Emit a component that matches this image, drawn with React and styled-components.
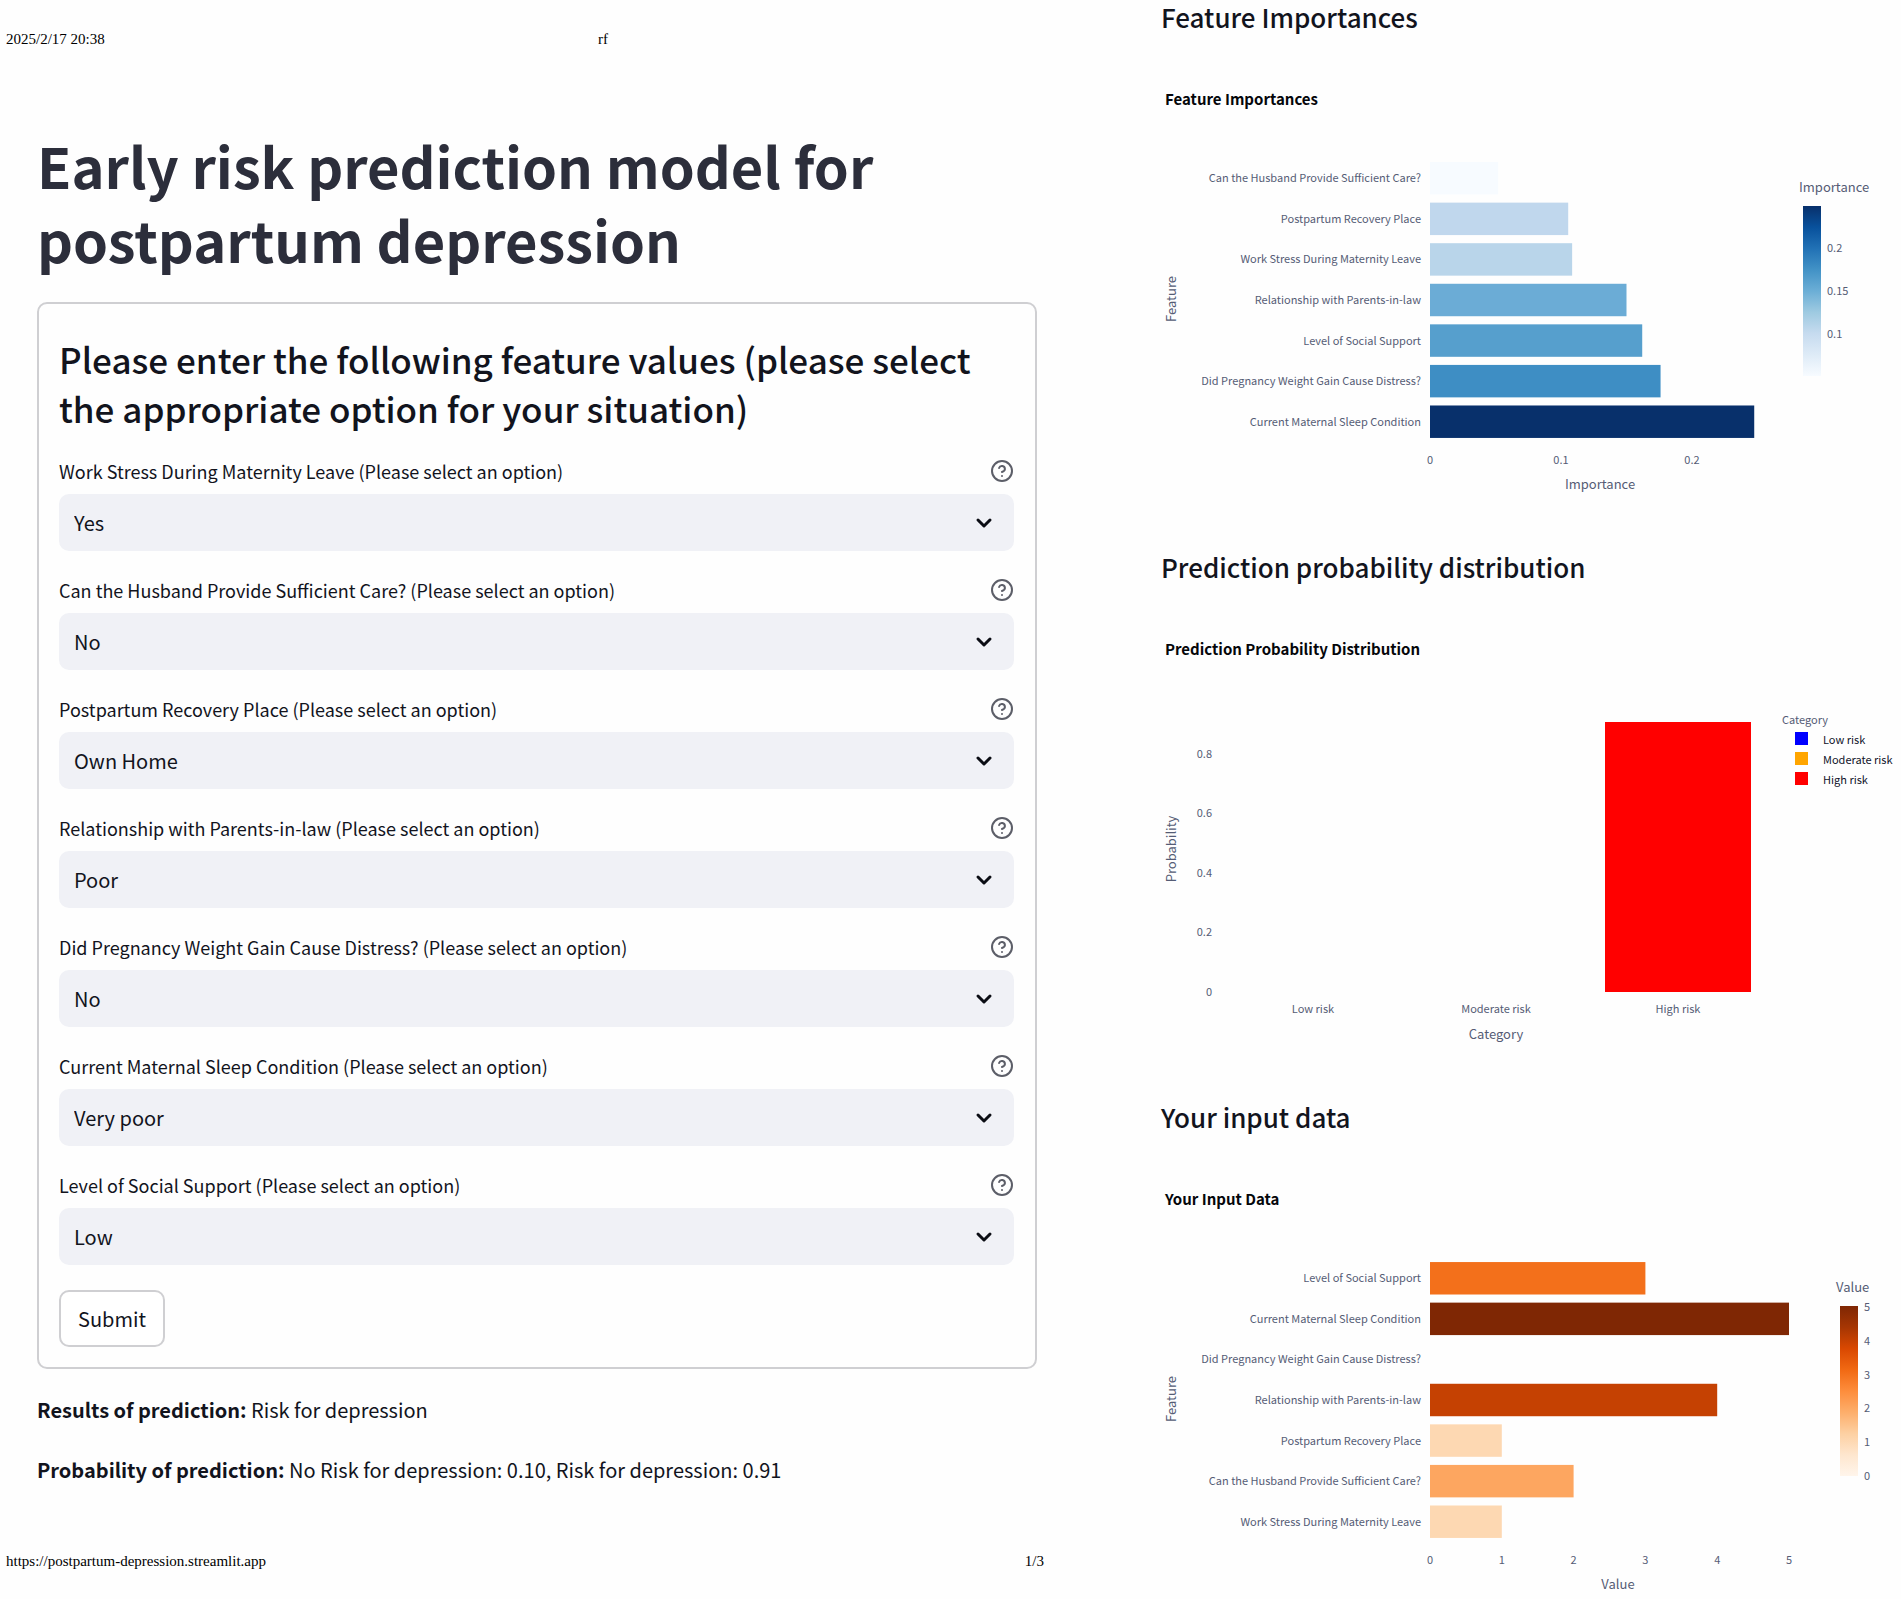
import React, { useState } from 'react';
import styled, { createGlobalStyle } from 'styled-components';
import { ChevronDown, CircleHelp } from 'lucide-react';

const GlobalStyle = createGlobalStyle`
  * {
    box-sizing: border-box;
  }

  body {
    margin: 0;
    background-color: #fefefe;
    color: #12141d;
    font-family: 'Noto Sans CJK SC', 'Noto Sans', sans-serif;
  }
`;

const Page = styled.div`
  display: grid;
  grid-template-columns: minmax(0, 1050fr) minmax(0, 740fr);
  column-gap: 111px;
`;

const Sheet = styled.div`
  display: flex;
  flex-direction: column;
  padding: 0 6px;
`;

const PrintHeader = styled.header`
  display: grid;
  grid-template-columns: 592fr 446fr;
  padding-top: 29px;
  font-family: 'Liberation Serif', serif;
  font-size: 15px;
  line-height: 20px;
  color: #000;
`;

const PrintFooter = styled.footer`
  display: flex;
  justify-content: space-between;
  margin-top: 66px;
  font-family: 'Liberation Serif', serif;
  font-size: 15px;
  line-height: 20px;
  color: #000;
`;

const SiteLink = styled.a`
  color: inherit;
  text-decoration: none;
`;

const Main = styled.main`
  padding: 79px 7px 0 31px;
`;

const Title = styled.h1`
  margin: 0 0 26px;
  font-size: 56px;
  line-height: 74px;
  font-weight: 700;
  color: #2c2e3b;
`;

const Form = styled.form`
  display: flex;
  flex-direction: column;
  gap: 25px;
  padding: 30px 21px 20px 20px;
  border: 2px solid #cfcfd2;
  border-radius: 10px;
`;

const FormTitle = styled.h2`
  margin: 0;
  font-size: 35px;
  line-height: 49px;
  font-weight: 500;
`;

const Field = styled.div`
  display: flex;
  flex-direction: column;
  gap: 9px;
`;

const LabelRow = styled.div`
  display: flex;
  align-items: center;
  justify-content: space-between;
  height: 28px;
`;

const Label = styled.label`
  font-size: 18px;
  line-height: 28px;
`;

const HelpIcon = styled(CircleHelp)`
  width: 24px;
  height: 24px;
  color: #5c5e68;
`;

const SelectBox = styled.div`
  display: grid;
  align-items: center;

  & > * {
    grid-area: 1 / 1;
  }
`;

const Select = styled.select`
  width: 100%;
  height: 57px;
  padding: 0 48px 0 15px;
  border: none;
  border-radius: 10px;
  background-color: #f0f1f6;
  appearance: none;
  font-family: inherit;
  font-size: 20px;
  color: inherit;
`;

const Arrow = styled(ChevronDown)`
  justify-self: end;
  width: 24px;
  height: 24px;
  margin-right: 18px;
  color: #0b0d14;
  pointer-events: none;
`;

const SubmitButton = styled.button`
  align-self: flex-start;
  height: 57px;
  padding: 0 17px;
  border: 2px solid #cfcfd2;
  border-radius: 10px;
  background-color: #fff;
  font-family: inherit;
  font-size: 20px;
  color: inherit;
`;

const Results = styled.section`
  display: flex;
  flex-direction: column;
  gap: 30px;
  padding-top: 26px;
`;

const Result = styled.p`
  margin: 0;
  font-size: 20px;
  line-height: 30px;

  strong {
    font-weight: 700;
  }
`;

const Charts = styled.div`
  display: flex;
  flex-direction: column;
  gap: 51px;
`;

const ChartTitle = styled.h2`
  margin: 0;
  font-size: 26px;
  line-height: 33px;
  font-weight: 500;
`;

const Chart = styled.svg`
  display: block;
  width: 100%;
  height: auto;
`;

const PlotTitle = styled.text`
  font-size: 15px;
  font-weight: 700;
  fill: #05060a;
`;

const AxisTitle = styled.text`
  font-size: 13px;
  fill: #555c75;
`;

const Tick = styled.text`
  font-size: 11px;
  fill: ${(props) => props.$dark ? '#10142a' : '#555c75'};
`;

const fields = [
  { id: 'stress', label: 'Work Stress During Maternity Leave', value: 'Yes', options: ['Yes', 'No'] },
  { id: 'husband', label: 'Can the Husband Provide Sufficient Care?', value: 'No', options: ['Yes', 'No'] },
  { id: 'place', label: 'Postpartum Recovery Place', value: 'Own Home', options: ['Own Home', 'Other'] },
  { id: 'inlaw', label: 'Relationship with Parents-in-law', value: 'Poor', options: ['Good', 'Fair', 'Poor'] },
  { id: 'weight', label: 'Did Pregnancy Weight Gain Cause Distress?', value: 'No', options: ['Yes', 'No'] },
  { id: 'sleep', label: 'Current Maternal Sleep Condition', value: 'Very poor', options: ['Good', 'Fair', 'Poor', 'Very poor'] },
  { id: 'support', label: 'Level of Social Support', value: 'Low', options: ['High', 'Medium', 'Low'] },
];

const importances = [
  { name: 'Can the Husband Provide Sufficient Care?', value: 0.052, color: '#f7fbff' },
  { name: 'Postpartum Recovery Place', value: 0.1055, color: '#c0d7ed' },
  { name: 'Work Stress During Maternity Leave', value: 0.1085, color: '#b9d5ea' },
  { name: 'Relationship with Parents-in-law', value: 0.15, color: '#6bacd6' },
  { name: 'Level of Social Support', value: 0.162, color: '#569fcd' },
  { name: 'Did Pregnancy Weight Gain Cause Distress?', value: 0.176, color: '#3e8ec4' },
  { name: 'Current Maternal Sleep Condition', value: 0.2475, color: '#08306b' },
];

const inputData = [
  { name: 'Level of Social Support', value: 3, color: '#f3701b' },
  { name: 'Current Maternal Sleep Condition', value: 5, color: '#7f2704' },
  { name: 'Did Pregnancy Weight Gain Cause Distress?', value: 0, color: '#fff5eb' },
  { name: 'Relationship with Parents-in-law', value: 4, color: '#c54102' },
  { name: 'Postpartum Recovery Place', value: 1, color: '#fdd8b2' },
  { name: 'Can the Husband Provide Sufficient Care?', value: 2, color: '#fda660' },
  { name: 'Work Stress During Maternity Leave', value: 1, color: '#fdd8b2' },
];

const categories = [
  { name: 'Low risk', color: '#0000ff', x: 152 },
  { name: 'Moderate risk', color: '#ffa500', x: 335 },
  { name: 'High risk', color: '#ff0000', x: 517 },
];

const blues = ['#08306b', '#08519c', '#2171b5', '#4292c6', '#6baed6', '#9ecae1', '#c6dbef', '#deebf7', '#f7fbff'];
const oranges = ['#7f2704', '#a63603', '#d94801', '#f16913', '#fd8d3c', '#fdae6b', '#fdd0a2', '#fee6ce', '#fff5eb'];

const PLOT_LEFT = 269;
const PLOT_TOP = 125;
const ROW = 284 / 7;

const YTitle = ({ children }) => (
  <AxisTitle textAnchor="middle" transform="translate(15 266) rotate(-90)">{children}</AxisTitle>
);

// Horizontal bars with a continuous colour scale on the right
const HorizontalBars = ({ id, title, data, unit, ticks, axisTitle, axisX, scale }) => (
  <Chart viewBox="0 0 740 466" role="img" aria-label={title}>
    <defs>
      <linearGradient id={id} x1="0" y1="0" x2="0" y2="1">
        {scale.colors.map((color, i) => (
          <stop key={color} offset={i / (scale.colors.length - 1)} stopColor={color} />
        ))}
      </linearGradient>
    </defs>
    <PlotTitle x="4" y="72">{title}</PlotTitle>
    <YTitle>Feature</YTitle>
    {data.map(({ name, value, color }, i) => (
      <g key={name}>
        <Tick x={PLOT_LEFT - 9} y={PLOT_TOP + ROW * (i + 0.5) + 4} textAnchor="end">{name}</Tick>
        <rect x={PLOT_LEFT} y={PLOT_TOP + ROW * (i + 0.1)} width={value * unit} height={ROW * 0.8} fill={color} />
      </g>
    ))}
    {ticks.map((tick) => (
      <Tick key={tick} x={PLOT_LEFT + tick * unit} y="431" textAnchor="middle">{tick}</Tick>
    ))}
    <AxisTitle x={axisX} y="456" textAnchor="middle">{axisTitle}</AxisTitle>
    <AxisTitle x={scale.x - 4} y="159">{axisTitle}</AxisTitle>
    <rect x={scale.x} y="173" width="18" height="170" fill={`url(#${id})`} />
    {scale.ticks.map(([label, y]) => (
      <Tick key={label} x={scale.x + 24} y={y}>{label}</Tick>
    ))}
  </Chart>
);

const ProbabilityChart = () => (
  <Chart viewBox="0 0 740 466" role="img" aria-label="Prediction Probability Distribution">
    <PlotTitle x="4" y="72">Prediction Probability Distribution</PlotTitle>
    <YTitle>Probability</YTitle>
    {[0, 0.2, 0.4, 0.6, 0.8].map((tick) => (
      <Tick key={tick} x="51" y={413 - tick * 298} textAnchor="end">{tick}</Tick>
    ))}
    <rect x="444" y="139" width="146" height="270" fill="#ff0000" />
    {categories.map(({ name, x }) => (
      <Tick key={name} x={x} y="430" textAnchor="middle">{name}</Tick>
    ))}
    <AxisTitle x="335" y="456" textAnchor="middle">Category</AxisTitle>
    <Tick x="621" y="141">Category</Tick>
    {categories.map(({ name, color }, i) => (
      <g key={name}>
        <rect x="634" y={149 + i * 20} width="13" height="13" fill={color} />
        <Tick $dark x="662" y={161 + i * 20}>{name}</Tick>
      </g>
    ))}
  </Chart>
);

const SelectField = ({ id, label, value, options }) => {
  const [selected, setSelected] = useState(value);

  return (
    <Field>
      <LabelRow>
        <Label htmlFor={id}>{label} (Please select an option)</Label>
        <HelpIcon aria-hidden="true" />
      </LabelRow>
      <SelectBox>
        <Select id={id} value={selected} onChange={(e) => setSelected(e.target.value)}>
          {options.map((option) => (
            <option key={option}>{option}</option>
          ))}
        </Select>
        <Arrow strokeWidth={3} aria-hidden="true" />
      </SelectBox>
    </Field>
  );
};

const App = () => (
  <>
    <GlobalStyle />
    <Page>
      <Sheet>
        <PrintHeader>
          <span>2025/2/17 20:38</span>
          <span>rf</span>
        </PrintHeader>
        <Main>
          <Title>Early risk prediction model for postpartum depression</Title>
          <Form onSubmit={(e) => e.preventDefault()}>
            <FormTitle>
              Please enter the following feature values (please select the appropriate option for your situation)
            </FormTitle>
            {fields.map((field) => (
              <SelectField key={field.id} {...field} />
            ))}
            <SubmitButton type="submit">Submit</SubmitButton>
          </Form>
          <Results>
            <Result><strong>Results of prediction:</strong> Risk for depression</Result>
            <Result>
              <strong>Probability of prediction:</strong> No Risk for depression: 0.10, Risk for depression: 0.91
            </Result>
          </Results>
        </Main>
        <PrintFooter>
          <SiteLink href="https://postpartum-depression.streamlit.app">https://postpartum-depression.streamlit.app</SiteLink>
          <span>1/3</span>
        </PrintFooter>
      </Sheet>
      <Charts>
        <section>
          <ChartTitle>Feature Importances</ChartTitle>
          <HorizontalBars
            id="blues"
            title="Feature Importances"
            data={importances}
            unit={1310}
            ticks={[0, 0.1, 0.2]}
            axisTitle="Importance"
            axisX={439}
            scale={{ x: 642, colors: blues, ticks: [['0.2', 219], ['0.15', 262], ['0.1', 305]] }}
          />
        </section>
        <section>
          <ChartTitle>Prediction probability distribution</ChartTitle>
          <ProbabilityChart />
        </section>
        <section>
          <ChartTitle>Your input data</ChartTitle>
          <HorizontalBars
            id="oranges"
            title="Your Input Data"
            data={inputData}
            unit={359 / 5}
            ticks={[0, 1, 2, 3, 4, 5]}
            axisTitle="Value"
            axisX={457}
            scale={{
              x: 679,
              colors: oranges,
              ticks: [['5', 178], ['4', 212], ['3', 246], ['2', 279], ['1', 313], ['0', 347]],
            }}
          />
        </section>
      </Charts>
    </Page>
  </>
);

export default App;
